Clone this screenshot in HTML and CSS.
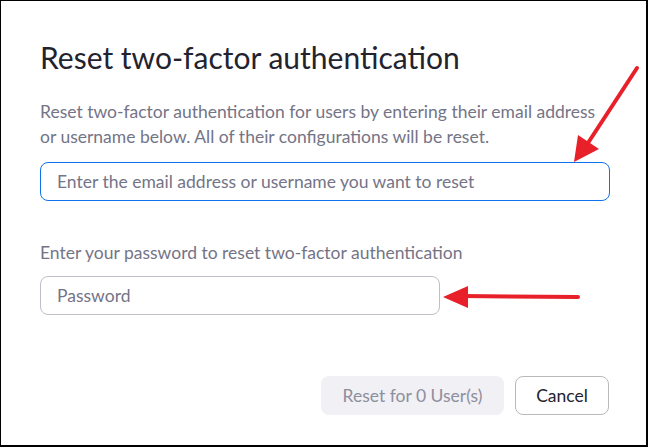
FILE: index.html
```html
<!DOCTYPE html>
<html lang="en">
<head>
    <meta charset="UTF-8">
    <meta name="viewport" content="width=device-width, initial-scale=1.0">
    <title>Reset two-factor authentication</title>
    <link rel="stylesheet" href="styles.css">
</head>
<body>
    <div class="dialog">
        <h1>Reset two-factor authentication</h1>
        <p class="intro">Reset two-factor authentication for users by entering their email address or username below. All of their configurations will be reset.</p>
        <input type="text" class="field field-focus" placeholder="Enter the email address or username you want to reset">

        <label class="label" for="pwd">Enter your password to reset two-factor authentication</label>
        <input type="password" id="pwd" class="field field-short" placeholder="Password">

        <div class="actions">
            <button class="btn btn-disabled">Reset for 0 User(s)</button>
            <button class="btn btn-cancel">Cancel</button>
        </div>
    </div>

    <!-- annotation arrows -->
    <svg class="arrows" width="648" height="447" viewBox="0 0 648 447">
        <line x1="637" y1="68" x2="586" y2="146" stroke="#e8202a" stroke-width="4" stroke-linecap="round"/>
        <polygon points="574,162 578,135 599,149" fill="#e8202a"/>
        <line x1="578" y1="297" x2="462" y2="296" stroke="#e8202a" stroke-width="4" stroke-linecap="round"/>
        <polygon points="443,297 468,286 468,308" fill="#e8202a"/>
    </svg>
</body>
</html>
```

FILE: styles.css
```css
html, body {
    margin: 0;
    padding: 0;
}
body {
    width: 648px;
    height: 447px;
    box-sizing: border-box;
    border-top: 1px solid #000;
    border-left: 1px solid #000;
    border-right: 2px solid #000;
    border-bottom: 2px solid #000;
    background: #fff;
    font-family: 'Lato', 'Open Sans', sans-serif;
    position: relative;
    overflow: hidden;
}
.dialog {
    padding: 34px 37px 0 39px;
    display: flex;
    flex-direction: column;
}
h1 {
    margin: 0;
    font-size: 30px;
    font-weight: 400;
    color: #23232f;
    line-height: 44px;
}
.intro {
    margin: 20px 0 13px;
    font-size: 17.5px;
    line-height: 25px;
    color: #747487;
}
.field {
    box-sizing: border-box;
    height: 39px;
    width: 570px;
    padding: 0 16px;
    border: 1px solid #bfbfca;
    border-radius: 8px;
    font-family: inherit;
    font-size: 17.5px;
    color: #23232f;
    outline: none;
    background: #fff;
}
.field::placeholder {
    color: #747487;
}
.field-focus {
    border-color: #0e72ed;
}
.field-short {
    width: 400px;
}
.label {
    margin: 40px 0 11px;
    font-size: 17.5px;
    line-height: 24px;
    color: #747487;
}
.actions {
    display: flex;
    justify-content: flex-end;
    gap: 11px;
    margin-top: 61px;
}
.btn {
    box-sizing: border-box;
    height: 39px;
    border-radius: 8px;
    font-family: inherit;
    font-size: 17.5px;
    padding: 0 20px;
}
.btn-disabled {
    width: 183px;
    border: none;
    background: #f0f0f5;
    color: #8e8e9d;
}
.btn-cancel {
    width: 94px;
    border: 1px solid #bababa;
    background: #fff;
    color: #23232f;
}
.arrows {
    position: absolute;
    left: -1px;
    top: -1px;
    pointer-events: none;
}
```
